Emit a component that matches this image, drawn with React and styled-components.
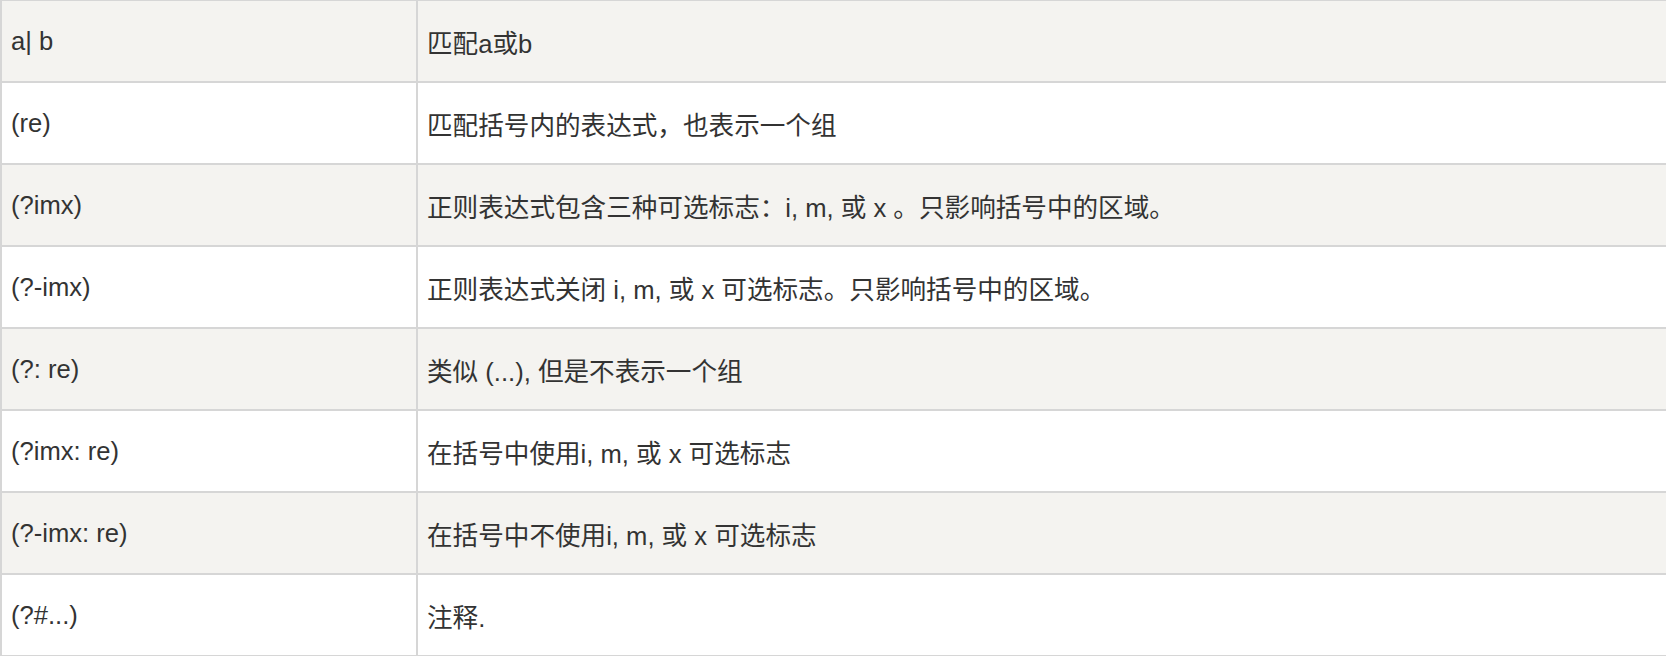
import React from "react";
import styled, { createGlobalStyle } from "styled-components";

const GlobalStyle = createGlobalStyle`
  html, body {
    margin: 0;
    padding: 0;
    background: #ffffff;
    overflow: hidden;
  }
`;

const rows = [
  ["a| b", "匹配a或b"],
  ["(re)", "匹配括号内的表达式，也表示一个组"],
  ["(?imx)", "正则表达式包含三种可选标志：i, m, 或 x 。只影响括号中的区域。"],
  ["(?-imx)", "正则表达式关闭 i, m, 或 x 可选标志。只影响括号中的区域。"],
  ["(?: re)", "类似 (...), 但是不表示一个组"],
  ["(?imx: re)", "在括号中使用i, m, 或 x 可选标志"],
  ["(?-imx: re)", "在括号中不使用i, m, 或 x 可选标志"],
  ["(?#...)", "注释."],
];

export default function App() {
  return (
    <>
      <GlobalStyle />
      <Table>
        <tbody>
          {rows.map(([pattern, desc], i) => (
            <Row key={pattern} shaded={i % 2 === 0}>
              <PatternCell>{pattern}</PatternCell>
              <DescCell>{desc}</DescCell>
            </Row>
          ))}
        </tbody>
      </Table>
    </>
  );
}

const Table = styled.table`
  width: 1670px;
  margin-top: -1px;
  border-collapse: collapse;
  font-family: "Liberation Sans", "Noto Sans CJK SC", sans-serif;
  font-size: 25.6px;
  color: #333333;
`;

const Row = styled.tr.withConfig({
  shouldForwardProp: (prop) => prop !== "shaded",
})`
  background: ${(p) => (p.shaded ? "#f4f3f0" : "#ffffff")};
`;

const Cell = styled.td`
  height: 80px;
  padding: 0 9px;
  border: 2px solid #d6d6d6;
  vertical-align: middle;
  box-sizing: content-box;
`;

const PatternCell = styled(Cell)`
  width: 396px;
`;

const DescCell = styled(Cell)``;
